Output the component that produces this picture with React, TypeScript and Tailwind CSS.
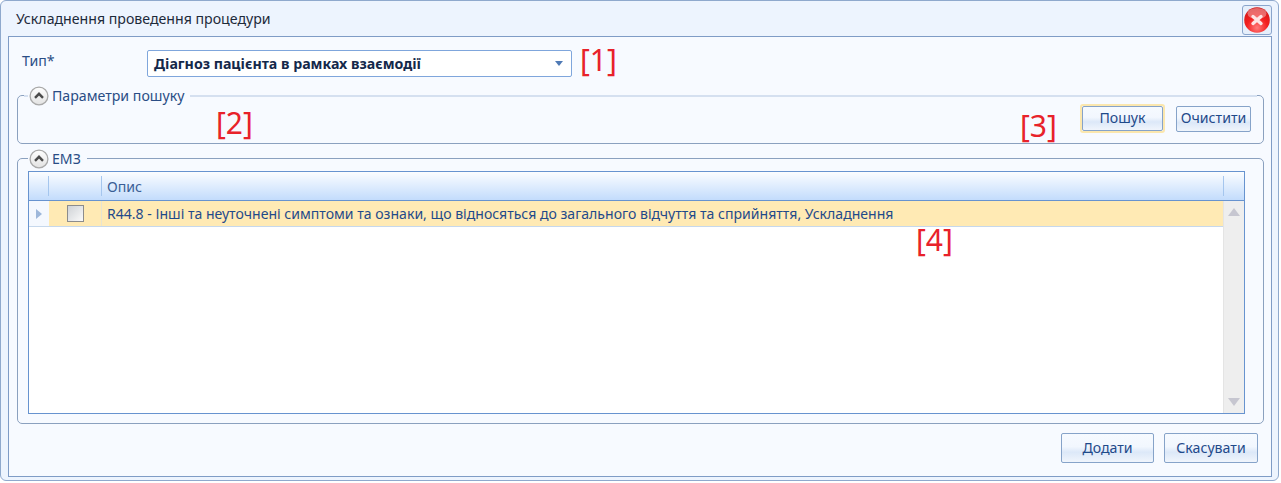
const FONT = "font-['Noto_Sans',sans-serif]";

function CollapseIcon() {
  return (
    <svg width="20" height="20" viewBox="0 0 20 20" className="shrink-0">
      <defs>
        <linearGradient id="cg" x1="0" y1="0" x2="0" y2="1">
          <stop offset="0" stopColor="#ffffff" />
          <stop offset="1" stopColor="#e2e2e2" />
        </linearGradient>
      </defs>
      <circle cx="10" cy="10" r="8.9" fill="url(#cg)" stroke="#a9a9a9" strokeWidth="1.3" />
      <path d="M6 11.8 10 7.8l4 4" fill="none" stroke="#4b4b4b" strokeWidth="2.4" />
    </svg>
  );
}

function CloseButton() {
  return (
    <button className="flex h-[30px] w-[30px] items-center justify-center rounded-[3px] border border-[#8aa5cc] bg-[#e6effb]">
      <svg width="26" height="26" viewBox="0 0 26 26">
        <defs>
          <radialGradient id="rg" cx="0.5" cy="0.8" r="0.8">
            <stop offset="0" stopColor="#ff7a7a" />
            <stop offset="0.5" stopColor="#f42020" />
            <stop offset="1" stopColor="#d01818" />
          </radialGradient>
        </defs>
        <circle cx="13" cy="13" r="12.8" fill="url(#rg)" />
        <ellipse cx="13" cy="6.5" rx="9.5" ry="5.5" fill="#ffffff" opacity="0.35" />
        <path d="M9 9.5 17 16.5M17 9.5 9 16.5" stroke="#fde4e4" strokeWidth="3.4" strokeLinecap="round" />
      </svg>
    </button>
  );
}

function Btn({ label, className }: { label: string; className: string }) {
  return (
    <button
      className={`rounded-[2px] border border-[#86a3c9] bg-[linear-gradient(#f6faff_0%,#f2f7fe_45%,#dce8f8_65%,#f0f5fc_100%)] text-[14.15px] leading-none text-[#1f4a8a] ${className}`}
    >
      {label}
    </button>
  );
}

function Group({ title, lineColor, className, children }: { title: string; lineColor: string; className: string; children: React.ReactNode }) {
  return (
    <div className={`relative rounded-[5px] border border-[#8ba1bf] ${className}`}>
      <div className={`absolute -top-[1px] left-[6px] right-[6px] ${lineColor}`} />
      <div className="absolute -top-[10px] left-[10px] flex h-[20px] items-center gap-[3px] bg-[#f7faff] pr-[6px] pl-[1px] text-[14.15px] leading-none text-[#2a4d85]">
        <CollapseIcon />
        <span>{title}</span>
      </div>
      {children}
    </div>
  );
}

function Note({ text, className }: { text: string; className: string }) {
  return <span className={`absolute text-[30px] leading-none text-[#e8222a] ${className}`}>{text}</span>;
}

export default function App() {
  return (
    <div className={`${FONT} relative h-[483px] w-[1281px] overflow-hidden bg-white`}>
      <div className="mr-[2px] flex h-[481px] flex-col rounded-[6px] border border-[#8fa9cd] bg-[#edf4fe] pr-[6px] pl-[7px] pb-[3px]">
        <div className="flex h-[35px] shrink-0 items-center justify-between pt-[3px]">
          <span className="pb-[2px] pl-[8px] text-[14.15px] leading-none text-[#1d2a3a]">Ускладнення проведення процедури</span>
          <CloseButton />
        </div>
        <div className="flex min-h-0 flex-1 flex-col border border-[#7f9cc6] bg-[#f7faff] pr-[7px] pl-[8px]">
          <div className="flex h-[40px] shrink-0 items-end pl-[5px]">
            <span className="w-[125px] pb-[9px] text-[14.15px] leading-none text-[#2a4d85]">Тип*</span>
            <div className="flex h-[27px] w-[425px] items-center justify-between rounded-[2px] border border-[#7fa6dc] bg-white pr-[8px] pl-[6px]">
              <span className="text-[14.2px] font-bold text-[#14284a]">Діагноз пацієнта в рамках взаємодії</span>
              <svg width="8" height="5" viewBox="0 0 8 5">
                <path d="M0 0h8L4 5z" fill="#4f7ab5" />
              </svg>
            </div>
            <span className="pb-[1px] pl-[8px] text-[30px] leading-[32px] text-[#e8222a]">[1]</span>
          </div>
          <Group title="Параметри пошуку" lineColor="h-[2px] bg-[#d5e0f0]" className="mt-[18px] flex h-[49px] shrink-0 items-start justify-end">
            <div className="flex items-center pt-[8px] pr-[12px]">
              <div className="rounded-[3px] border-[2px] border-[#fbe7ae]">
                <Btn label="Пошук" className="block h-[25px] w-[81px]" />
              </div>
              <Btn label="Очистити" className="ml-[11px] h-[26px] w-[75px]" />
            </div>
          </Group>
          <Group title="ЕМЗ" lineColor="h-[1px] bg-[#8ba1bf]" className="mt-[14px] h-[266px] shrink-0 pt-[12px] pr-[18px] pl-[10px]">
            <div className="flex h-[243px] flex-col border-[1px] border-[#6793cf] bg-white">
              <div className="flex h-[29px] shrink-0 items-center border-b border-[#6793cf] bg-[linear-gradient(#fbfdff,#c3dcfc)] text-[14.15px] text-[#3a5f96]">
                <div className="h-[20px] w-[20px] border-r border-[#a5c6ee]" />
                <div className="h-[20px] w-[53px] border-r border-[#a5c6ee]" />
                <div className="flex-1 pt-[3px] pl-[5px] leading-none">Опис</div>
                <div className="h-[20px] w-[21px] border-l border-[#a5c6ee]" />
              </div>
              <div className="flex min-h-0 flex-1">
                <div className="min-w-0 flex-1">
                  <div className="flex h-[26px] items-center border-b border-[#c6d8ec] bg-[#ffeab4]">
                    <div className="flex h-full w-[20px] items-center justify-center bg-[#f4f8fe]">
                      <svg width="6" height="10" viewBox="0 0 6 10">
                        <path d="M0 0l6 5-6 5z" fill="#9db7da" />
                      </svg>
                    </div>
                    <div className="flex h-full w-[53px] items-center justify-center border-r border-[#e8e4d0]">
                      <span className="block h-[17px] w-[17px] border border-[#8c8c8c] bg-[linear-gradient(135deg,#cfd2d6,#fafafa)]" />
                    </div>
                    <span className="pt-[2px] pl-[5px] text-[14.07px] leading-none whitespace-nowrap text-[#1f4a8a]">
                      R44.8 - Інші та неуточнені симптоми та ознаки, що відносяться до загального відчуття та сприйняття, Ускладнення
                    </span>
                  </div>
                </div>
                <div className="flex w-[21px] shrink-0 flex-col items-center justify-between border-l border-[#e4e4e4] bg-[#eeeeee] py-[7px]">
                  <svg width="12" height="8" viewBox="0 0 12 8">
                    <path d="M6 0l6 8H0z" fill="#c6c6d0" />
                  </svg>
                  <svg width="12" height="8" viewBox="0 0 12 8">
                    <path d="M0 0h12L6 8z" fill="#c6c6d0" />
                  </svg>
                </div>
              </div>
            </div>
          </Group>
          <div className="mt-[9px] flex justify-end gap-[10px] pr-[6px]">
            <Btn label="Додати" className="h-[30px] w-[93px]" />
            <Btn label="Скасувати" className="h-[30px] w-[94px]" />
          </div>
        </div>
      </div>
      <Note text="[2]" className="top-[108px] left-[216px]" />
      <Note text="[3]" className="top-[111px] left-[1020px]" />
      <Note text="[4]" className="top-[225px] left-[916px]" />
    </div>
  );
}
